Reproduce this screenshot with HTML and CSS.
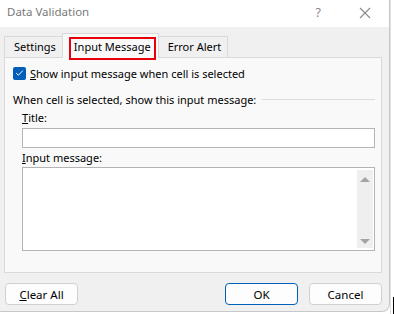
FILE: index.html
```html
<!DOCTYPE html>
<html lang="en">
<head>
    <meta charset="UTF-8">
    <title>Data Validation</title>
    <link rel="stylesheet" href="styles.css">
</head>
<body>
    <div class="dialog">
        <div class="titlebar">
            <span class="title">Data Validation</span>
            <span class="help">?</span>
            <svg class="close" width="12" height="12" viewBox="0 0 12 12">
                <path d="M1 1 L11 11 M11 1 L1 11" stroke="#8a8a8a" stroke-width="1.1" fill="none"/>
            </svg>
        </div>

        <div class="tabs">
            <div class="tab">Settings</div>
            <div class="tab active"><span class="mark">Input Message</span></div>
            <div class="tab">Error Alert</div>
        </div>

        <div class="panel">
            <label class="check-row">
                <span class="checkbox">
                    <svg width="9" height="8" viewBox="0 0 9 8"><path d="M1.2 4.2 L3.4 6.2 L7.8 1.6" stroke="#fff" stroke-width="1" fill="none"/></svg>
                </span>
                <span><u>S</u>how input message when cell is selected</span>
            </label>

            <div class="group">
                <span>When cell is selected, show this input message:</span>
                <span class="rule"></span>
            </div>

            <div class="field">
                <div class="field-label"><u>T</u>itle:</div>
                <div class="textbox"></div>
            </div>

            <div class="field">
                <div class="field-label"><u>I</u>nput message:</div>
                <div class="textarea">
                    <div class="scrollbar">
                        <span class="arrow up"></span>
                        <span class="arrow down"></span>
                    </div>
                </div>
            </div>
        </div>

        <div class="footer">
            <button class="btn"><u>C</u>lear All</button>
            <span class="spacer"></span>
            <button class="btn primary">OK</button>
            <button class="btn">Cancel</button>
        </div>
    </div>
    <div class="sheet-edge"><span class="cursor"></span></div>
</body>
</html>
```

FILE: styles.css
```css
body {
    margin: 0;
    width: 394px;
    height: 314px;
    overflow: hidden;
    display: flex;
    background: #fff;
    font-family: "Noto Sans", "Open Sans", sans-serif;
    font-size: 11px;
    color: #000;
}

.dialog {
    width: 389px;
    height: 311px;
    background: #f0f0f0;
    border-right: 1px solid #c8c8c8;
    border-bottom: 1px solid #c8c8c8;
    border-bottom-right-radius: 8px;
    display: flex;
    flex-direction: column;
    flex-shrink: 0;
}

.titlebar {
    height: 27px;
    background: #fff;
    display: flex;
    align-items: center;
    padding-left: 7px;
    color: #7a7a7a;
    font-size: 11.5px;
}

.title {
    flex: 1;
    margin-top: -5px;
}

.help {
    margin-right: 38px;
    margin-top: -3px;
    font-size: 12.5px;
    color: #8a8a8a;
}

.close {
    margin-right: 18px;
    margin-top: -2px;
}

.tabs {
    display: flex;
    align-items: flex-end;
    height: 30px;
    padding-left: 4px;
}

.tab {
    height: 20px;
    line-height: 19px;
    padding: 0 6px 0 9px;
    background: #f0f0f0;
    border: 1px solid #d9d9d9;
    border-bottom: none;
    margin-right: -1px;
}

.tab.active {
    height: 24px;
    line-height: 22px;
    background: #f9f9f9;
    padding: 0 2px 0 6px;
    position: relative;
    z-index: 1;
    margin-bottom: -1px;
}

.mark {
    display: inline-block;
    border: 2px solid #e8000b;
    padding: 0 3px 0 3px;
    line-height: 15px;
    height: 23px;
    box-sizing: border-box;
    margin-top: 3px;
    vertical-align: top;
}

.panel {
    margin: 0 7px 0 4px;
    height: 206px;
    background: #f9f9f9;
    border: 1px solid #d9d9d9;
    padding: 8px 6px 0 8px;
}

.check-row {
    display: flex;
    align-items: center;
    gap: 4px;
    height: 14px;
}

.checkbox {
    width: 13px;
    height: 13px;
    border-radius: 2px;
    background: #005fb8;
    display: flex;
    align-items: center;
    justify-content: center;
}

.group {
    display: flex;
    align-items: center;
    margin-top: 12px;
    height: 14px;
}

.rule {
    flex: 1;
    height: 1px;
    background: #dcdcdc;
    margin-left: 6px;
}

.field {
    padding-left: 9px;
}

.field-label {
    height: 16px;
    line-height: 16px;
    margin-top: 4px;
}

.textbox {
    height: 18px;
    background: #fff;
    border: 1px solid #b4b4b4;
    margin-top: 2px;
}

.field + .field .field-label {
    margin-top: 2px;
}

.textarea {
    height: 78px;
    background: #fff;
    border: 1px solid #b4b4b4;
    margin-top: 1px;
    display: flex;
    justify-content: flex-end;
    padding: 2px 1px;
}

.scrollbar {
    width: 16px;
    background: #efefef;
    display: flex;
    flex-direction: column;
    justify-content: space-between;
    align-items: center;
    padding: 7px 0 4px;
}

.arrow {
    width: 0;
    height: 0;
    border-left: 5px solid transparent;
    border-right: 5px solid transparent;
}

.arrow.up {
    border-bottom: 5px solid #a3a3a3;
}

.arrow.down {
    border-top: 5px solid #a3a3a3;
}

.footer {
    display: flex;
    padding: 10px 7px 0 5px;
    gap: 11px;
}

.spacer {
    flex: 1;
}

.btn {
    width: 73px;
    height: 22px;
    background: #fdfdfd;
    border: 1px solid #d0d0d0;
    border-radius: 4px;
    font-family: inherit;
    font-size: 11.5px;
    color: #000;
    padding: 0;
}

.btn.primary {
    border-color: #005fb8;
}

.sheet-edge {
    flex: 1;
    border-left: 1px solid #e0e0e0;
    position: relative;
}

.cursor {
    position: absolute;
    left: 2px;
    bottom: 0;
    width: 1px;
    height: 17px;
    background: #000;
}
```
